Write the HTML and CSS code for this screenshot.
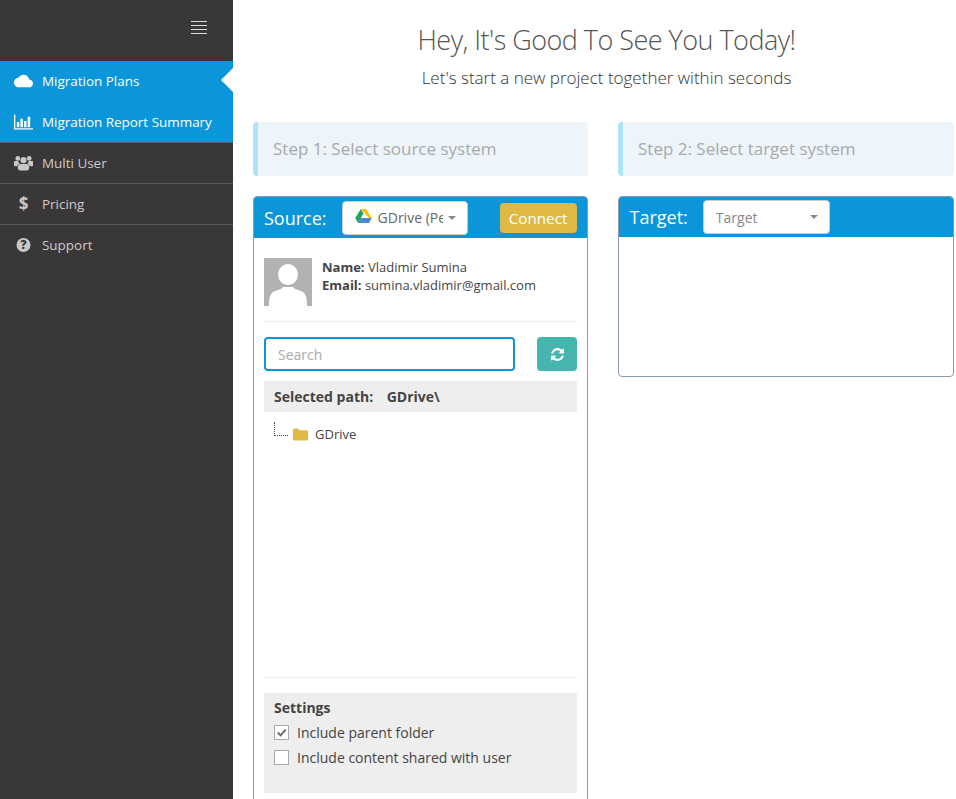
FILE: index.html
```html
<!DOCTYPE html>
<html lang="en">
  <head>
    <meta charset="UTF-8" />
    <title>Migration Plans</title>
    <link rel="stylesheet" href="styles.css">
  </head>
  <body>
    <div class="page">
      <aside class="sidebar">
        <div class="sidebar-top">
          <div class="burger"><span></span><span></span><span></span><span></span></div>
        </div>
        <ul class="menu">
          <li class="menu-item active current">
            <svg class="menu-icon" viewBox="0 4 24 16"><path d="M19.35 10.04C18.67 6.59 15.64 4 12 4 9.11 4 6.6 5.64 5.35 8.04 2.34 8.36 0 10.91 0 14c0 3.31 2.69 6 6 6h13c2.76 0 5-2.24 5-5 0-2.64-2.05-4.78-4.65-4.96z"/></svg>
            Migration Plans
          </li>
          <li class="menu-item active">
            <svg class="menu-icon" viewBox="0 0 20 16"><path d="M0 0h1.4v14.6H20V16H0z"/><path d="M3 8h2.6v5.6H3zM6.8 4.5h2.6v9.1H6.8zM10.6 7h2.6v6.6h-2.6zM14.4 2.5H17v11.1h-2.6z"/></svg>
            Migration Report Summary
          </li>
          <li class="menu-item">
            <svg class="menu-icon" viewBox="0 0 20 16"><circle cx="4" cy="3.2" r="2.5"/><circle cx="16" cy="3.2" r="2.5"/><circle cx="10" cy="5" r="3.2"/><path d="M0 6.6C0 6 .8 6 2 6h2.4c.2 1.2.7 2.2 1.5 2.9C4.5 9.4 3.7 10.4 3.4 11.5H1.2C.4 11.500 0 11 0 10.300zM20 6.600C20 6 19.200 6 18 6h-2.400c-.2 1.200-.7 2.200-1.500 2.900 1.400.5 2.200 1.500 2.500 2.600h2.200c.8 0 1.200-.5 1.200-1.200z"/><path d="M6.500 9h7c1.700 0 2.500 1.500 2.500 3.800 0 2-1 3.200-2.500 3.200h-7C5 16 4 14.800 4 12.800 4 10.500 4.800 9 6.500 9z"/></svg>
            Multi User
          </li>
          <li class="menu-item">
            <span class="menu-icon dollar">$</span>
            Pricing
          </li>
          <li class="menu-item">
            <svg class="menu-icon" viewBox="0 0 16 16"><circle cx="8" cy="8" r="7"/><text class="help-mark" x="8" y="12" text-anchor="middle">?</text></svg>
            Support
          </li>
        </ul>
      </aside>

      <main class="content">
        <header class="welcome">
          <h1>Hey, It's Good To See You Today!</h1>
          <p>Let's start a new project together within seconds</p>
        </header>

        <div class="columns">
          <section class="column">
            <div class="step">Step 1: Select source system</div>
            <div class="card">
              <div class="card-head source-head">
                <span class="card-title">Source:</span>
                <div class="select source-select">
                  <svg class="drive-logo" viewBox="0 0 20 17">
                    <polygon points="6.700,0 13.300,0 20,11 16.600,11" fill="#f4c20d"/>
                    <polygon points="6.700,0 10,5.500 3.400,17 0,11" fill="#1fa463"/>
                    <polygon points="6.600,11 20,11 16.600,17 3.400,17" fill="#4c86d0"/>
                  </svg>
                  <span class="select-text">GDrive (Personal)</span>
                  <span class="caret"></span>
                </div>
                <button class="connect">Connect</button>
              </div>
              <div class="card-body">
                <div class="profile">
                  <svg class="avatar" viewBox="0 0 48 48">
                    <rect width="48" height="48" fill="#b0b2b4"/>
                    <ellipse cx="24" cy="16.500" rx="10" ry="10.500" fill="#fff"/>
                    <path d="M5 48c0-9 1-13 6-15 4-1.500 7-2 8-4h10c1 2 4 2.500 8 4 5 2 6 6 6 15z" fill="#fff"/>
                  </svg>
                  <div class="profile-text">
                    <div><b>Name:</b> Vladimir Sumina</div>
                    <div><b>Email:</b> sumina.vladimir@gmail.com</div>
                  </div>
                </div>
                <hr />
                <div class="search-row">
                  <input class="search" type="text" placeholder="Search" />
                  <button class="refresh">
                    <svg viewBox="0 0 1536 1536"><path d="M1511 928q0 5-1 7-64 268-268 434.500t-478 166.500q-146 0-282.500-55t-243.500-157l-129 129q-19 19-45 19t-45-19-19-45v-448q0-26 19-45t45-19h448q26 0 45 19t19 45-19 45l-137 137q71 66 161 102t187 36q134 0 250-65t186-179q11-17 53-117 8-23 30-23h192q13 0 22.500 9.500t9.500 22.500zm25-800v448q0 26-19 45t-45 19h-448q-26 0-45-19t-19-45 19-45l138-138q-148-137-349-137-134 0-250 65t-186 179q-11 17-53 117-8 23-30 23h-199q-13 0-22.500-9.500t-9.500-22.500v-7q65-268 270-434.500t480-166.500q146 0 284 55.500t245 156.500l130-129q19-19 45-19t45 19 19 45z"/></svg>
                  </button>
                </div>
                <div class="path-bar"><span>Selected path:</span><span>GDrive\</span></div>
                <div class="tree">
                  <span class="tree-line"></span>
                  <svg class="folder" viewBox="0 0 16 14"><path d="M1.500 1h4l1.500 2h7.500c.8 0 1.500.7 1.500 1.500v8c0 .8-.7 1.500-1.500 1.500h-13C.700 14 0 13.300 0 12.500v-10C0 1.700.700 1 1.500 1z"/></svg>
                  <span>GDrive</span>
                </div>
                <hr />
                <div class="settings">
                  <div class="settings-title">Settings</div>
                  <div class="check-row">
                    <span class="checkbox"><svg viewBox="0 0 14 14"><path d="M3 7l3 3 5.500-6" /></svg></span>
                    Include parent folder
                  </div>
                  <div class="check-row">
                    <span class="checkbox"></span>
                    Include content shared with user
                  </div>
                </div>
              </div>
            </div>
          </section>

          <section class="column">
            <div class="step">Step 2: Select target system</div>
            <div class="card target-card">
              <div class="card-head">
                <span class="card-title">Target:</span>
                <div class="select target-select">
                  <span class="select-text">Target</span>
                  <span class="caret"></span>
                </div>
              </div>
            </div>
          </section>
        </div>
      </main>
    </div>
  </body>
</html>
```
FILE: styles.css
```css
:root {
  --blue: #0a96d9;
  --dark: #3a3738;
  --text: #444;
  --panel: #eeeeee;
}
html,
body {
  height: 100%;
}
body {
  margin: 0;
  overflow: hidden;
  font-family: "Open Sans", sans-serif;
  font-size: 13px;
  color: var(--text);
  background-color: #fff;
}
.page {
  display: flex;
  height: 100%;
}

/* sidebar */
.sidebar {
  width: 233px;
  flex-shrink: 0;
  background-color: var(--dark);
}
.sidebar-top {
  height: 61px;
  display: flex;
  justify-content: flex-end;
  padding: 21px 26px 0 0;
  box-sizing: border-box;
}
.burger {
  width: 16px;
}
.burger span {
  display: block;
  height: 1px;
  background-color: #ddd;
  margin-bottom: 3px;
}
.menu {
  list-style: none;
  margin: 0;
  padding: 0;
}
.menu-item {
  position: relative;
  display: flex;
  align-items: center;
  height: 41px;
  box-sizing: border-box;
  padding: 0 0 1px 42px;
  font-size: 13.45px;
  color: #cfc9cd;
  border-bottom: 1px solid #5c5a5b;
}
.menu-item:last-child {
  border-bottom: 0;
  padding-bottom: 2px;
}
.menu-item.active {
  background-color: var(--blue);
  color: #fff;
  border-bottom: 0;
  padding-bottom: 2px;
}
.menu-item.active + .menu-item.active {
  border-bottom: 1px solid #5c5a5b;
  padding-bottom: 1px;
}
.menu-item.current::after {
  content: "";
  position: absolute;
  right: 0;
  top: 7px;
  border-style: solid;
  border-width: 12px 12px 12px 0;
  border-color: transparent #fff transparent transparent;
}
.menu-icon {
  position: absolute;
  left: 14px;
  width: 19px;
  height: 16px;
  fill: currentColor;
}
.menu-item:not(.active) .menu-icon {
  color: #c8c8c8;
}
.dollar {
  left: 14px;
  text-align: center;
  font-size: 17px;
  font-weight: 700;
  line-height: 16px;
}
.help-mark {
  font-family: "Open Sans", sans-serif;
  font-size: 12px;
  font-weight: 800;
  fill: var(--dark);
}

/* main */
.content {
  flex: 1;
  min-width: 0;
  padding: 0 2px 0 20px;
}
.welcome {
  text-align: center;
  padding-left: 6px;
  height: 122px;
  box-sizing: border-box;
  padding-top: 20px;
}
.welcome h1 {
  margin: 0;
  font-size: 27px;
  line-height: 40px;
  font-weight: 300;
  letter-spacing: -0.53px;
  color: #555;
}
.welcome p {
  margin: 3px 0 0;
  font-size: 17px;
  line-height: 30px;
  font-weight: 300;
  color: #333;
}
.columns {
  display: grid;
  grid-template-columns: 335px 336px;
  gap: 30px;
}
.step {
  height: 54px;
  line-height: 54px;
  padding-left: 15px;
  border-left: 5px solid #ace3f9;
  border-radius: 4px;
  background-color: #edf5fb;
  font-size: 17px;
  color: #a9a9a9;
  margin-bottom: 20px;
}
.card {
  border: 1px solid #8a9bb0;
  border-radius: 4px;
  overflow: hidden;
}
.target-card {
  height: 181px;
  box-sizing: border-box;
}
.card-head {
  display: flex;
  align-items: center;
  height: 40px;
  background-color: var(--blue);
  padding-left: 10.5px;
}
.source-head {
  height: 41px;
  padding-left: 10px;
}
.card-title {
  font-size: 18px;
  color: #fff;
}
.select {
  display: flex;
  align-items: center;
  height: 34px;
  box-sizing: border-box;
  background-color: #fff;
  border: 1px solid #ccc;
  border-radius: 4px;
  color: #666;
  font-size: 14px;
}
.source-select {
  width: 126px;
  margin-left: 15px;
  padding-left: 12px;
}
.target-select {
  width: 127px;
  margin-left: 15px;
  padding-left: 12px;
  color: #888;
}
.drive-logo {
  width: 17px;
  height: 14px;
  margin: -3px 6px 0 0;
  flex-shrink: 0;
}
.select-text {
  flex: 1;
  overflow: hidden;
  white-space: nowrap;
}
.caret {
  flex-shrink: 0;
  margin: 0 11px 0 5px;
  border-style: solid;
  border-width: 4px 4px 0;
  border-color: #888 transparent transparent;
}
.connect {
  margin-left: 32px;
  width: 77px;
  height: 30px;
  padding: 0;
  border: 0;
  border-radius: 4px;
  background-color: #e0b945;
  color: #fff;
  font-family: inherit;
  font-size: 15.2px;
}
.card-body {
  padding: 20px 10px 40px;
}
.card-body hr {
  border: 0;
  border-top: 1px solid #eee;
  margin: 0;
}
.profile {
  display: flex;
  gap: 10px;
  padding-bottom: 15px;
}
.avatar {
  width: 48px;
  height: 48px;
  flex-shrink: 0;
}
.profile-text {
  line-height: 18px;
  color: #444;
}
.search-row {
  display: flex;
  justify-content: space-between;
  margin-top: 15px;
}
.search {
  width: 251px;
  height: 34px;
  box-sizing: border-box;
  padding: 0 12px;
  border: 2px solid var(--blue);
  border-radius: 4px;
  font-family: inherit;
  font-size: 14px;
  outline: none;
}
.search::placeholder {
  color: #aaa;
}
.refresh {
  width: 40px;
  height: 34px;
  padding: 0;
  border: 0;
  border-radius: 4px;
  background-color: #46b5ad;
  display: flex;
  align-items: center;
  justify-content: center;
}
.refresh svg {
  width: 13px;
  height: 13px;
  fill: #fff;
}
.path-bar {
  display: flex;
  gap: 13.5px;
  margin-top: 10px;
  height: 31px;
  line-height: 31px;
  padding-left: 10px;
  background-color: var(--panel);
  font-weight: 700;
  font-size: 14px;
}
.tree {
  position: relative;
  display: flex;
  align-items: center;
  gap: 7px;
  height: 265px;
  box-sizing: border-box;
  padding: 0 0 221px 29px;
  font-size: 13px;
}
.tree-line {
  position: absolute;
  left: 10px;
  top: 10px;
  width: 13px;
  height: 13px;
  border-left: 1px dotted #444;
  border-bottom: 1px dotted #444;
}
.folder {
  width: 15px;
  height: 14px;
  fill: #e0b945;
}
.settings {
  margin-top: 15px;
  height: 100px;
  box-sizing: border-box;
  padding: 3px 10px;
  background-color: var(--panel);
  font-size: 14px;
}
.settings-title {
  font-weight: 700;
  line-height: 24px;
}
.check-row {
  display: flex;
  align-items: center;
  gap: 8px;
  height: 25px;
}
.checkbox {
  width: 13px;
  height: 13px;
  border: 1px solid #aaa;
  background-color: #fff;
  flex-shrink: 0;
}
.checkbox svg {
  display: block;
  fill: none;
  stroke: #666;
  stroke-width: 2;
}
```
